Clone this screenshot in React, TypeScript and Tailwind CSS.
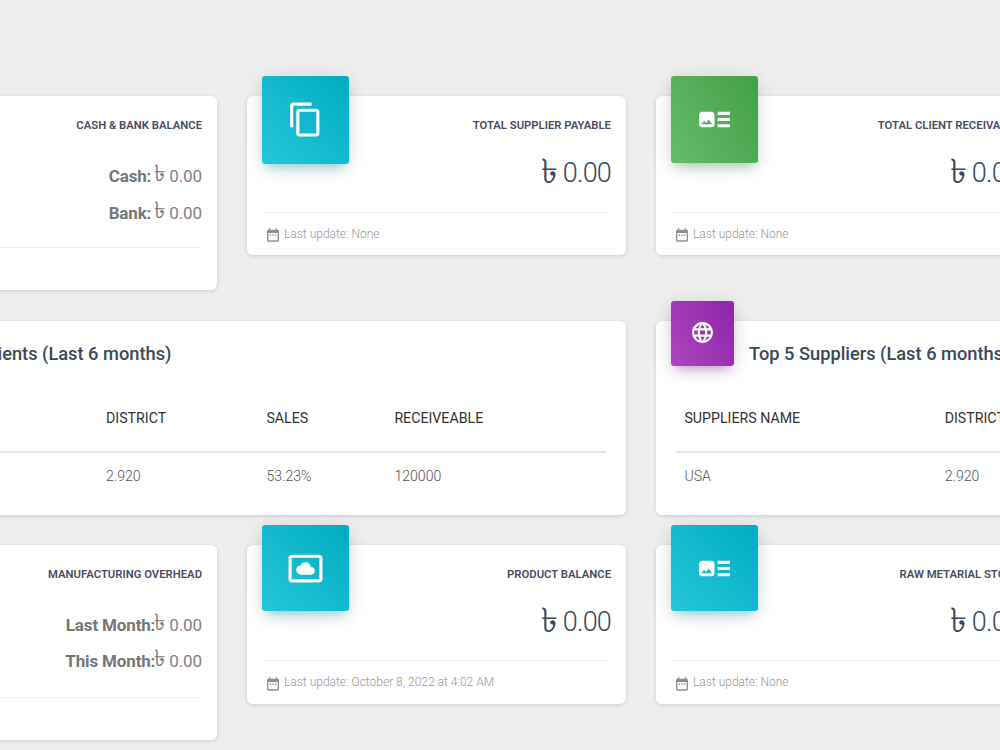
import React from 'react';
import {
  MdArtTrack,
  MdContentCopy,
  MdDateRange,
  MdLanguage,
  MdSettingsSystemDaydream,
} from 'react-icons/md';

const card = 'rounded-md bg-white shadow-[0_1px_4px_0_rgba(0,0,0,0.14)] px-[15px]';

const info =
  'bg-linear-[45deg,#26c6da,#00acc1] shadow-[0_4px_20px_0_rgba(0,0,0,0.14),0_7px_10px_-5px_rgba(0,188,212,0.4)]';
const success =
  'bg-linear-[60deg,#66bb6a,#43a047] shadow-[0_4px_20px_0_rgba(0,0,0,0.14),0_7px_10px_-5px_rgba(76,175,80,0.4)]';
const primary =
  'bg-linear-[60deg,#ab47bc,#8e24aa] shadow-[0_4px_20px_0_rgba(0,0,0,0.14),0_7px_10px_-5px_rgba(156,39,176,0.4)]';

const Category = ({ children }: { children: React.ReactNode }) => (
  <p className="text-right text-[11.3px] leading-4 font-semibold text-[#494d63] whitespace-nowrap">{children}</p>
);

type BalanceProps = { title: string; rows: string[][]; gap: string; tall?: boolean };

const BalanceCard = ({ title, rows, gap, tall }: BalanceProps) => (
  <div className={`${card} pt-[22px] ${tall ? 'h-[195px]' : 'h-[194px]'}`}>
    <Category>{title}</Category>
    <div className={`mt-[23px] border-b border-[#eee] text-right text-[17px] text-[#777] ${tall ? 'h-[92px]' : 'h-[91px]'}`}>
      {rows.map(([label, value]) => (
        <div key={label} className="flex h-[36.4px] justify-end leading-[38px] font-light">
          <b className={`font-bold tracking-[-0.15px] ${gap}`}>{label}</b>
          <span className="mr-[4px] -ml-px -mt-[2px] text-[23px]">৳</span>
          <span className="font-normal tracking-[-0.1px] text-[#828282]">{value}</span>
        </div>
      ))}
    </div>
  </div>
);

type StatProps = {
  title: string;
  updated: string;
  color: string;
  icon: React.ElementType;
  tall?: boolean;
};

const StatCard = ({ title, updated, color, icon: Icon, tall }: StatProps) => (
  <div className={`${card} h-[159px]`}>
    <div className="flex h-[116.4px] items-start justify-between border-b border-[#eee]">
      <div
        className={`-mt-5 flex w-[87px] shrink-0 items-center justify-center rounded-[3px] text-white ${tall ? 'h-[88px] pb-[2px]' : 'h-[86.5px]'} ${color}`}
      >
        <Icon className="size-[37px]" />
      </div>
      <div className="pt-[22px]">
        <Category>{title}</Category>
        <h3 className="mt-[21px] flex justify-end text-[27px] leading-9 font-light tracking-[-0.8px] text-[#3c4858]">
          <span className="mr-[6px] -mt-[2px] text-[34px]">৳</span>
          0.00
        </h3>
      </div>
    </div>
    <div className="flex items-center pt-[11px] pl-[3px] text-[12px] leading-5 font-light text-[#999]">
      <MdDateRange className="mt-[3px] mr-[3px] size-4 text-[#8f8f8f]" />
      Last update: {updated}
    </div>
  </div>
);

type TableProps = { title: string; color: string; columns: string; head: string[]; row: string[] };

const TableCard = ({ title, color, columns, head, row }: TableProps) => (
  <div className={`${card} h-[194px]`}>
    <div className="flex h-[71px] items-start">
      <div className={`-mt-5 mr-[15px] flex h-[65px] w-[63px] shrink-0 items-center justify-center rounded-[3px] pb-px text-white ${color}`}>
        <MdLanguage className="size-[25px]" />
      </div>
      <h4 className="mt-[20px] text-[18.25px] leading-[25px] font-medium whitespace-nowrap text-[#3c4858]">{title}</h4>
    </div>
    <div className="mx-[5px]">
      <div className={`grid h-[61px] border-b-2 border-[#e7e7e7] pt-[15px] text-[14.2px] leading-[22px] text-[#333] ${columns}`}>
        {head.map((cell) => (
          <span key={cell} className="pl-[8.4px] font-[450] whitespace-nowrap">{cell}</span>
        ))}
      </div>
      <div className={`grid pt-[12px] text-[14.1px] leading-[22px] font-light text-[#555] ${columns}`}>
        {row.map((cell) => (
          <span key={cell} className="pl-[8.4px]">{cell}</span>
        ))}
      </div>
    </div>
  </div>
);

const App = () => (
  <main className="h-[750px] w-[1000px] overflow-hidden bg-[#eee] pt-[96.4px] font-[Roboto,sans-serif]">
    <div className="-ml-[162px] grid w-[1197px] auto-rows-[194px] grid-cols-3 items-start gap-x-[30px] gap-y-[30.3px]">
      <BalanceCard title="CASH & BANK BALANCE" gap="mr-1" rows={[['Cash:', '0.00'], ['Bank:', '0.00']]} />
      <StatCard title="TOTAL SUPPLIER PAYABLE" updated="None" color={info} icon={MdContentCopy} tall />
      <StatCard title="TOTAL CLIENT RECEIVABLE" updated="None" color={success} icon={MdArtTrack} />

      <div className="col-span-2">
        <TableCard
          title="Top 5 Clients (Last 6 months)"
          color={success}
          columns="grid-cols-[239.6px_160.4px_128px_1fr]"
          head={['CLIENTS NAME', 'DISTRICT', 'SALES', 'RECEIVEABLE']}
          row={['USA', '2.920', '53.23%', '120000']}
        />
      </div>
      <TableCard
        title="Top 5 Suppliers (Last 6 months)"
        color={primary}
        columns="grid-cols-[260.3px_1fr]"
        head={['SUPPLIERS NAME', 'DISTRICT']}
        row={['USA', '2.920']}
      />

      <BalanceCard title="MANUFACTURING OVERHEAD" gap="" rows={[['Last Month:', '0.00'], ['This Month:', '0.00']]} tall />
      <StatCard title="PRODUCT BALANCE" updated="October 8, 2022 at 4:02 AM" color={info} icon={MdSettingsSystemDaydream} />
      <StatCard title="RAW METARIAL STOCK" updated="None" color={info} icon={MdArtTrack} />
    </div>
  </main>
);

export default App;
